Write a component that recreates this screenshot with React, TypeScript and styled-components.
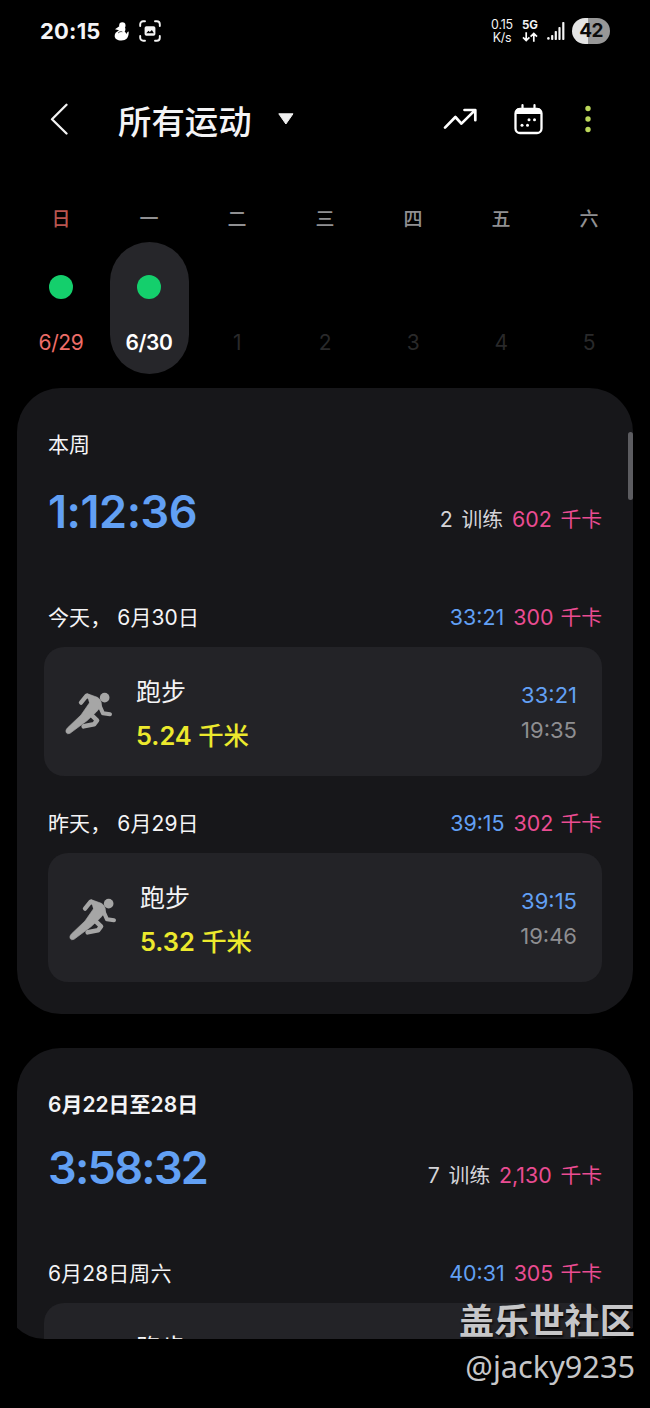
import React from "react";
import styled, { createGlobalStyle } from "styled-components";

const sans = `Inter, "Noto Sans CJK SC", sans-serif`;
const blue = "#62a0f4";
const pink = "#ea4c92";

const GlobalStyle = createGlobalStyle`
  * { box-sizing: border-box; }
  html, body { margin: 0; padding: 0; background: #000; }
  body { font-family: ${sans}; color: #f4f4f6; overflow: hidden; }
`;

const Screen = styled.main`
  position: relative;
  width: 650px;
  height: 1408px;
  overflow: hidden;
  background: #000;
`;

const StatusBar = styled.div`
  display: flex;
  align-items: center;
  height: 62px;
  padding: 0 40px;
`;

const Clock = styled.span`
  width: 74px;
  font-size: 22px;
  font-weight: 700;
  line-height: 30px;
  letter-spacing: 0.2px;
`;

const StatusIcons = styled.div`
  display: flex;
  align-items: center;
  gap: 10px;
  svg { display: block; }
`;

const StatusRight = styled.div`
  display: flex;
  align-items: center;
  margin-left: auto;
`;

const NetSpeed = styled.div`
  width: 24px;
  margin-right: 8px;
  font-size: 12.4px;
  line-height: 13.5px;
  text-align: center;
  letter-spacing: -0.2px;
  white-space: nowrap;
`;

const Network = styled.div`
  width: 16px;
  margin-right: 9px;
  font-size: 11.5px;
  font-weight: 700;
  line-height: 11px;
  text-align: center;
  svg { display: block; margin: 1px auto 0; }
`;

const Battery = styled.div`
  width: 38px;
  height: 26px;
  margin-left: 7px;
  border-radius: 13px;
  background: linear-gradient(90deg, #e4e4e4 42%, #979797 42%);
  color: #0b0b0b;
  font-size: 19px;
  font-weight: 700;
  line-height: 26px;
  text-align: center;
  letter-spacing: -0.6px;
`;

const Header = styled.header`
  display: flex;
  align-items: center;
  height: 118px;
  padding: 0 58px 4px 50px;
  svg { display: block; flex: none; }
`;

const Title = styled.h1`
  margin: 6px 26px 0 50px;
  font-size: 33.4px;
  font-weight: 500;
  line-height: 44px;
`;

const HeaderActions = styled.div`
  display: flex;
  align-items: center;
  gap: 37px;
  margin-left: auto;
  svg:last-child { margin-left: 4px; }
`;

const Week = styled.section`
  display: grid;
  grid-template-columns: repeat(7, 88px);
  height: 208px;
  padding: 25px 17px 0;
`;

const Day = styled.div`
  display: flex;
  flex-direction: column;
  align-items: center;
`;

const DayName = styled.span<{ $sunday?: boolean }>`
  height: 37px;
  font-size: 19px;
  font-weight: 500;
  line-height: 30px;
  color: ${(p) => (p.$sunday ? "#b9554f" : "#909092")};
`;

const DayPill = styled.div<{ $selected?: boolean }>`
  display: flex;
  flex-direction: column;
  align-items: center;
  justify-content: space-between;
  width: 79px;
  height: 132px;
  padding: 33px 0 16px;
  border-radius: 40px;
  background: ${(p) => (p.$selected ? "#26262a" : "transparent")};
`;

const Dot = styled.i<{ $on?: boolean }>`
  width: 24px;
  height: 24px;
  border-radius: 50%;
  background: ${(p) => (p.$on ? "#14cf6c" : "transparent")};
`;

const DayDate = styled.span<{ $tone: "sunday" | "selected" | "future" }>`
  font-size: 21px;
  line-height: 30px;
  letter-spacing: -0.4px;
  font-weight: ${(p) => (p.$tone === "selected" ? 600 : 400)};
  color: ${(p) =>
    p.$tone === "sunday" ? "#ee6d68" : p.$tone === "selected" ? "#fff" : "#29292a"};
`;

const List = styled.div`
  display: flex;
  flex-direction: column;
  gap: 34px;
  height: 951px;
  margin: 0 4px;
  padding: 0 13px;
  overflow: hidden;
  border-radius: 0 0 41px 41px;
`;

const Card = styled.section`
  flex: none;
  padding: 42px 31px 32px;
  border-radius: 44px;
  background: #17171a;
`;

const CardTitle = styled.h2<{ $strong?: boolean }>`
  margin: 0;
  font-size: 21px;
  line-height: 30px;
  font-weight: ${(p) => (p.$strong ? 600 : 400)};
`;

const SummaryRow = styled.div<{ $top: number }>`
  display: flex;
  justify-content: space-between;
  height: 60px;
  margin-top: ${(p) => p.$top}px;
`;

const Total = styled.strong<{ $tracking: number }>`
  font-size: 45px;
  font-weight: 600;
  line-height: 62px;
  letter-spacing: ${(p) => p.$tracking}px;
  color: ${blue};
`;

const SummaryText = styled.span`
  padding-top: 23px;
  font-size: 21.4px;
  line-height: 30px;
  word-spacing: 2.7px;
  color: #d4d4d8;
  white-space: pre;
`;

const DateRow = styled.div<{ $top: number }>`
  display: flex;
  justify-content: space-between;
  height: 30px;
  margin: ${(p) => p.$top}px 0 15px;
  font-size: 21px;
  line-height: 30px;
  white-space: pre;
`;

const DateLabel = styled.span`
  line-height: 31px;
  letter-spacing: 0.1px;
`;

const Stats = styled.span`
  font-size: 21.4px;
  word-spacing: 1px;
`;

const Tint = styled.span<{ $color: string }>`
  color: ${(p) => p.$color};
`;

const Duration = styled(Tint)`
  margin-right: 2px;
`;

const Unit = styled.span`
  font-size: 20.8px;
`;

const Workout = styled.article<{ $bleed?: boolean }>`
  display: flex;
  align-items: center;
  height: 129px;
  margin-left: ${(p) => (p.$bleed ? -4 : 0)}px;
  padding: 0 25px 0 21px;
  border-radius: 20px;
  background: #232327;
  svg { display: block; flex: none; margin-top: 4px; }
`;

const WorkoutInfo = styled.div`
  margin-left: 23px;
  padding-top: 2px;
`;

const WorkoutName = styled.div`
  font-size: 25px;
  line-height: 45px;
`;

const Distance = styled.div`
  font-size: 25.4px;
  font-weight: 600;
  line-height: 41px;
  color: #ece92d;
  white-space: pre;
`;

const DistanceUnit = styled.span`
  font-weight: 500;
`;

const WorkoutTimes = styled.div`
  margin-left: auto;
  padding-top: 2px;
  font-size: 22px;
  line-height: 35px;
  text-align: right;
  color: #8e8e91;
`;

const ScrollThumb = styled.div`
  position: absolute;
  top: 432px;
  right: 17px;
  width: 5px;
  height: 68px;
  border-radius: 3px;
  background: #5c5c60;
`;

const Watermark = styled.div`
  position: absolute;
  right: 15px;
  top: 1300px;
  color: #c6c6c8;
  text-align: right;
  text-shadow: 1px 2px 2px rgba(0, 0, 0, 0.8);
`;

const Community = styled.div`
  font-size: 35.2px;
  font-weight: 700;
  line-height: 42px;
`;

const Handle = styled.div`
  margin-top: 1px;
  font-family: "Noto Sans", sans-serif;
  font-size: 30.7px;
  line-height: 46px;
`;

const BirdIcon = () => (
  <svg width="15" height="19" viewBox="0 0 45 56" fill="#fff">
    <circle cx="25" cy="10" r="9.5" />
    <path d="M16 12 3 21l12 3-10 8C-3 45 6 55 22 55s23-10 22-27c-3 0-6 5-7 8-1-4-3-6-5-8 3-4 3-9 0-14z" />
    <path d="M12 33c3-4 9-6 13-4" stroke="#000" strokeWidth="2" fill="none" />
  </svg>
);

const CaptureIcon = () => (
  <svg width="22" height="22" viewBox="0 0 22 22" fill="none" stroke="#f4f4f4" strokeWidth="1.9" strokeLinecap="round">
    <path d="M1.2 6V4.2a3 3 0 0 1 3-3H6M16 1.2h1.8a3 3 0 0 1 3 3V6M20.8 16v1.8a3 3 0 0 1-3 3H16M6 20.8H4.2a3 3 0 0 1-3-3V16" />
    <rect x="5.6" y="6.2" width="10.8" height="9.6" rx="1.8" fill="#f4f4f4" stroke="none" />
    <path d="M7.2 13.2 9.5 10.8l1.3 1.1 2.1-1.9 2 3.2z" fill="#000" stroke="none" />
  </svg>
);

const DataArrows = () => (
  <svg width="16" height="10" viewBox="0 0 16 10" fill="none" stroke="#fff" strokeWidth="1.7">
    <path d="M4.2.3v8M1 5.3l3.2 3.3 3.2-3.3M11.8 9.7v-8M8.6 4.7l3.2-3.3L15 4.7" />
  </svg>
);

const SignalIcon = () => (
  <svg width="18" height="18" viewBox="0 0 18 18" fill="#f4f4f4">
    <circle cx="1.4" cy="16.4" r="1.3" />
    <rect x="4.1" y="13" width="2.2" height="5" rx=".8" />
    <rect x="7.7" y="9" width="2.2" height="9" rx=".8" />
    <rect x="11.4" y="5" width="2.2" height="13" rx=".8" />
    <rect x="15.2" y="0" width="2.2" height="18" rx=".8" />
  </svg>
);

const BackIcon = () => (
  <svg width="18" height="32" viewBox="0 0 18 32" fill="none" stroke="#f2f2f2" strokeWidth="2.3" strokeLinecap="round" strokeLinejoin="round">
    <path d="M16.5 1.8 2 16.3l14.5 14.2" />
  </svg>
);

const CaretIcon = () => (
  <svg width="16" height="12" viewBox="0 0 16 12" fill="#f0f0f0" stroke="#f0f0f0" strokeWidth="1" strokeLinejoin="round">
    <path d="M.8.8h14.2L7.9 11z" />
  </svg>
);

const TrendIcon = () => (
  <svg width="34" height="22" viewBox="0 0 34 22" fill="none" stroke="#fff" strokeWidth="2.7" strokeLinecap="round" strokeLinejoin="round">
    <path d="M2 19.6 12.4 9l6 6.6L31.8 2.4M21.5 2h10.8v10.2" />
  </svg>
);

const CalendarIcon = () => (
  <svg width="29" height="31" viewBox="0 0 29 31">
    <rect x="1.5" y="5" width="26" height="24" rx="4.5" fill="none" stroke="#fff" strokeWidth="2.3" />
    <path d="M1.5 10V8c0-2.5 1.5-4 4-4h18c2.5 0 4 1.5 4 4v2z" fill="#fff" />
    <path d="M8.5 1.2v4M20.5 1.2v4" stroke="#fff" strokeWidth="2.2" strokeLinecap="round" />
    <g fill="#fff">
      <circle cx="15" cy="15.8" r="1.5" />
      <circle cx="20.5" cy="15.8" r="1.5" />
      <circle cx="8" cy="21.2" r="1.5" />
      <circle cx="13.5" cy="21.2" r="1.5" />
    </g>
  </svg>
);

const MoreIcon = () => (
  <svg width="8" height="30" viewBox="0 0 8 30" fill="#bcd85a">
    <circle cx="4" cy="4.5" r="2.7" />
    <circle cx="4" cy="15" r="2.7" />
    <circle cx="4" cy="25.5" r="2.7" />
  </svg>
);

const RunnerIcon = () => (
  <svg width="48" height="43" viewBox="105 157 144 129" stroke="#a6a6a6" fill="none" strokeLinecap="round" strokeLinejoin="round">
    <circle cx="224" cy="174" r="14.5" fill="#a6a6a6" stroke="none" />
    <path d="M153 189 170 168 196 180" strokeWidth="13" />
    <path d="M207 194 219 221 240 224" strokeWidth="12" />
    <path d="M180 222 201 242 192 254 161 260" strokeWidth="14" />
    <path d="M172 162 202 173Q216 181 214 199L199 217 171 243 120 281Q112 285 108 278 106 271 112 265L153 226 178 190Z" fill="#a6a6a6" strokeWidth="2" />
  </svg>
);

interface WorkoutItemProps {
  distance: string;
  duration: string;
  time: string;
  bleed?: boolean;
}

const WorkoutItem = ({ distance, duration, time, bleed }: WorkoutItemProps) => (
  <Workout $bleed={bleed}>
    <RunnerIcon />
    <WorkoutInfo>
      <WorkoutName>跑步</WorkoutName>
      <Distance>
        {distance} <DistanceUnit>千米</DistanceUnit>
      </Distance>
    </WorkoutInfo>
    <WorkoutTimes>
      <Tint as="div" $color={blue}>{duration}</Tint>
      <div>{time}</div>
    </WorkoutTimes>
  </Workout>
);

const DayHeading = ({ label, duration, kcal, top }: { label: string; duration: string; kcal: string; top: number }) => (
  <DateRow $top={top}>
    <DateLabel>{label}</DateLabel>
    <Stats>
      <Duration $color={blue}>{duration}</Duration>{" "}
      <Tint $color={pink}>
        {kcal} <Unit>千卡</Unit>
      </Tint>
    </Stats>
  </DateRow>
);

interface SummaryProps {
  total: string;
  count: string;
  kcal: string;
  top: number;
  tracking: number;
}

const Summary = ({ total, count, kcal, top, tracking }: SummaryProps) => (
  <SummaryRow $top={top}>
    <Total $tracking={tracking}>{total}</Total>
    <SummaryText>
      {count} <Unit>训练</Unit> <Tint $color={pink}>{kcal} <Unit>千卡</Unit></Tint>
    </SummaryText>
  </SummaryRow>
);

const days = [
  { name: "日", date: "6/29", active: true, tone: "sunday" },
  { name: "一", date: "6/30", active: true, tone: "selected" },
  { name: "二", date: "1", active: false, tone: "future" },
  { name: "三", date: "2", active: false, tone: "future" },
  { name: "四", date: "3", active: false, tone: "future" },
  { name: "五", date: "4", active: false, tone: "future" },
  { name: "六", date: "5", active: false, tone: "future" },
] as const;

export default function App() {
  return (
    <Screen>
      <GlobalStyle />
      <StatusBar>
        <Clock>20:15</Clock>
        <StatusIcons>
          <BirdIcon />
          <CaptureIcon />
        </StatusIcons>
        <StatusRight>
          <NetSpeed>0.15<br />K/s</NetSpeed>
          <Network>5G<DataArrows /></Network>
          <SignalIcon />
          <Battery>42</Battery>
        </StatusRight>
      </StatusBar>
      <Header>
        <BackIcon />
        <Title>所有运动</Title>
        <CaretIcon />
        <HeaderActions>
          <TrendIcon />
          <CalendarIcon />
          <MoreIcon />
        </HeaderActions>
      </Header>
      <Week>
        {days.map((d) => (
          <Day key={d.name}>
            <DayName $sunday={d.tone === "sunday"}>{d.name}</DayName>
            <DayPill $selected={d.tone === "selected"}>
              <Dot $on={d.active} />
              <DayDate $tone={d.tone}>{d.date}</DayDate>
            </DayPill>
          </Day>
        ))}
      </Week>
      <List>
        <Card>
          <CardTitle>本周</CardTitle>
          <Summary total="1:12:36" count="2" kcal="602" top={21} tracking={-0.45} />
          <DayHeading label="今天， 6月30日" duration="33:21" kcal="300" top={61} />
          <WorkoutItem distance="5.24" duration="33:21" time="19:35" bleed />
          <DayHeading label="昨天， 6月29日" duration="39:15" kcal="302" top={32} />
          <WorkoutItem distance="5.32" duration="39:15" time="19:46" />
        </Card>
        <Card>
          <CardTitle $strong>6月22日至28日</CardTitle>
          <Summary total="3:58:32" count="7" kcal="2,130" top={17} tracking={-1.7} />
          <DayHeading label="6月28日周六" duration="40:31" kcal="305" top={61} />
          <WorkoutItem distance="5.10" duration="40:31" time="19:40" bleed />
        </Card>
      </List>
      <ScrollThumb />
      <Watermark>
        <Community>盖乐世社区</Community>
        <Handle>@jacky9235</Handle>
      </Watermark>
    </Screen>
  );
}
